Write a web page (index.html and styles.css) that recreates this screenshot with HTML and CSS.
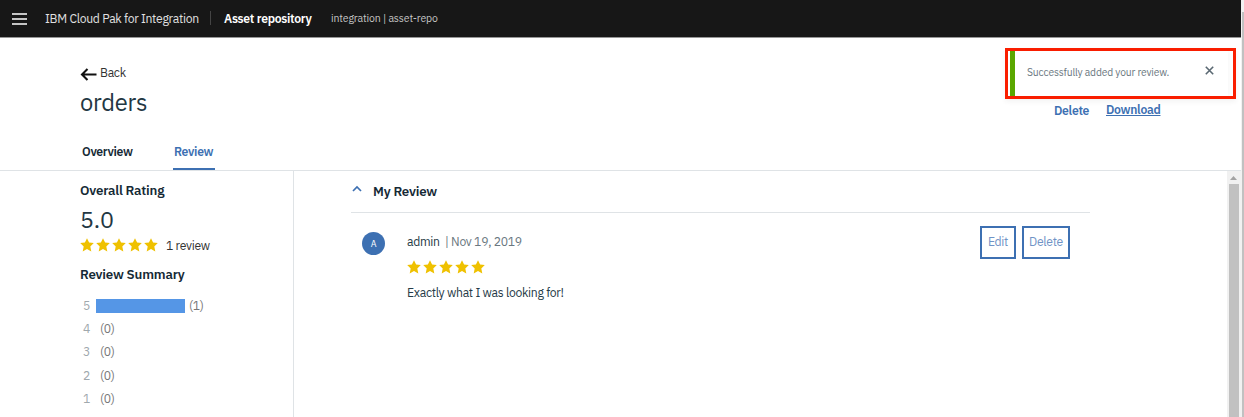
FILE: index.html
```html
<!DOCTYPE html>
<html lang="en">
<head>
<meta charset="utf-8">
<title>Asset repository</title>
<link rel="stylesheet" href="styles.css">
</head>
<body>
<svg class="defs" width="0" height="0"><symbol id="star" viewBox="0 0 14 14"><path d="M7 .2l2.1 4.3 4.7.6-3.5 3.4 1 4.9L7 11l-4.3 2.4 1-4.9L.2 5.1l4.7-.6z"/></symbol></svg>
<div class="screen">
  <div class="app">
    <header class="topbar">
      <svg class="menu" width="15" height="12" viewBox="0 0 15 12"><path d="M0 1h15M0 6h15M0 11h15" stroke="#fff" stroke-width="1.6"/></svg>
      <span class="product">IBM Cloud Pak for Integration</span>
      <span class="rule"></span>
      <span class="service">Asset repository</span>
      <span class="instance">integration | asset-repo</span>
    </header>
    <section class="heading">
      <div class="titles">
        <a class="back"><svg width="17" height="13" viewBox="0 0 17 13"><path d="M16.5 6.5H2M7.5 1L2 6.5 7.5 12" fill="none" stroke="#111" stroke-width="2.1"/></svg><span class="back-label">Back</span></a>
        <h1 class="title">orders</h1>
      </div>
      <div class="actions"><a class="remove">Delete</a><a class="download">Download</a></div>
    </section>
    <nav class="tabs"><a class="tab overview">Overview</a><a class="tab active"><span class="review-label">Review</span></a></nav>
    <div class="content">
      <aside class="ratings">
        <h2 class="h overall">Overall Rating</h2>
        <div class="score">5.0</div>
        <div class="score-row"><span class="stars"><svg><use href="#star"/></svg><svg><use href="#star"/></svg><svg><use href="#star"/></svg><svg><use href="#star"/></svg><svg><use href="#star"/></svg></span><span class="count">1 review</span></div>
        <h2 class="h summary">Review Summary</h2>
        <div class="bars">
          <div class="bar-row"><span class="n">5</span><span class="bar"></span><span class="total">(1)</span></div>
          <div class="bar-row"><span class="n">4</span><span class="total">(0)</span></div>
          <div class="bar-row"><span class="n">3</span><span class="total">(0)</span></div>
          <div class="bar-row"><span class="n">2</span><span class="total">(0)</span></div>
          <div class="bar-row"><span class="n">1</span><span class="total">(0)</span></div>
        </div>
      </aside>
      <main class="reviews">
        <div class="review-head"><svg width="10" height="7" viewBox="0 0 10 7"><path d="M1 6l4-4 4 4" fill="none" stroke="#3d70b2" stroke-width="1.7"/></svg><h2 class="h mine">My Review</h2></div>
        <article class="review">
          <span class="avatar">A</span>
          <div class="body">
            <div class="by"><span class="admin">admin</span><span class="date">| Nov 19, 2019</span></div>
            <span class="stars"><svg><use href="#star"/></svg><svg><use href="#star"/></svg><svg><use href="#star"/></svg><svg><use href="#star"/></svg><svg><use href="#star"/></svg></span>
            <p class="text">Exactly what I was looking for!</p>
          </div>
          <div class="buttons"><button class="btn edit">Edit</button><button class="btn delete">Delete</button></div>
        </article>
      </main>
      <div class="scrollbar"><svg width="13" height="13" viewBox="0 0 13 13"><path d="M3 9h7L6.5 5z" fill="#a3a3a3"/></svg><div class="thumb"></div></div>
    </div>
  </div>
  <div class="window-scroll"><div class="window-thumb"></div></div>
</div>
<div class="highlight"><div class="toast"><span class="message">Successfully added your review.</span><svg width="9" height="9" viewBox="0 0 9 9"><path d="M.8.8l7.4 7.4M8.2.8L.8 8.2" stroke="#5a6872" stroke-width="1.6"/></svg></div></div>
</body>
</html>
```
FILE: styles.css
```css
* { box-sizing: border-box; }
body { margin: 0; background: #fff; color: #152935; font-family: "IBM Plex Sans", Roboto, sans-serif; font-size: 12.2px; letter-spacing: -.3px; line-height: 16px; overflow: hidden; }
h1, h2, p { margin: 0; font-weight: 400; }
span, a { white-space: nowrap; }
svg { display: block; flex: none; }
.defs { position: absolute; }
.screen { display: flex; height: 417px; }
.app { width: 1241px; display: flex; flex-direction: column; }
.topbar { height: 38px; flex: none; display: flex; background: #171717; border-bottom: 1px solid #969696; padding: 10px 0 0 12px; color: #e0e0e0; }
.menu { margin: 3px 18px 0 0; }
.product { width: 165px; }
.rule { width: 1px; height: 14px; margin-top: 1px; background: #444; }
.service { width: 107px; margin-left: 13px; color: #fff; font-weight: 600; }
.instance { font-size: 10.5px; letter-spacing: -.14px; color: #c6c6c6; }
.heading { height: 96px; flex: none; display: flex; padding-left: 80px; }
.titles { width: 974px; }
.back { display: flex; padding-top: 26px; color: #333; }
.back svg { margin: 4px 3px 0 0; }
.title { font-size: 23.7px; letter-spacing: -.24px; line-height: 30px; margin-top: 7px; color: #233743; }
.actions { display: flex; padding-top: 63px; color: #3d70b2; font-weight: 600; }
.remove { width: 52px; padding-top: 1px; }
.download { text-decoration: underline; }
.tabs { height: 37px; flex: none; border-bottom: 1px solid #dfe3e6; padding-left: 82px; display: flex; font-weight: 600; }
.tab { padding-top: 9px; height: 36px; }
.overview { width: 91px; }
.active { width: 42px; padding-left: 1px; color: #3d70b2; border-bottom: 2px solid #3d70b2; }
.content { flex: 1; display: flex; }
.ratings { width: 294px; border-right: 1px solid #dfe3e6; padding: 10px 0 0 80px; }
.h { font-size: 13.3px; letter-spacing: -.19px; font-weight: 600; line-height: 18px; white-space: nowrap; }
.score { font-size: 23.3px; line-height: 30px; margin-top: 5px; letter-spacing: -.2px; color: #233743; }
.score-row { display: flex; height: 15px; margin-top: 4px; color: #333; }
.stars { display: flex; gap: 2px; margin-left: -.5px; }
.score-row .stars svg { margin-top: -.5px; }
.stars svg { width: 14px; height: 14px; fill: #efc100; }
.count { margin: -1px 0 0 8.5px; }
.summary { margin-top: 12px; }
.bars { margin-top: 11px; }
.bar-row { display: flex; align-items: center; height: 23.3px; color: #777; }
.n, .total { padding-bottom: 2px; }
.n { width: 16px; padding-left: 3px; color: #a0a8ad; }
.bar { width: 89px; height: 14px; background: #5596e6; }
.total { margin-left: 4px; }
.reviews { width: 933px; padding-left: 57px; }
.review-head { width: 739px; height: 42px; border-bottom: 1px solid #dfe3e6; display: flex; padding: 11px 0 0 1px; }
.review-head svg { margin: 3px 11px 0 0; }
.review { display: flex; width: 739px; padding: 13px 20px 0 11px; }
.avatar { width: 23px; height: 23px; margin-top: 6px; border-radius: 50%; background: #3d70b2; color: #fff; text-align: center; font-size: 9px; line-height: 23px; }
.body { width: 574px; padding: 7px 0 0 22px; }
.by { display: flex; color: #6a7780; height: 27px; }
.admin { width: 38px; color: #263b47; }
.text { margin-top: 10px; color: #263b47; white-space: nowrap; }
.buttons { display: flex; gap: 6px; margin-left: 21px; }
.btn { height: 33px; padding: 0 0 4px; background: #fff; border: 2px solid #3d70b2; color: #6f93c6; font: inherit; letter-spacing: -.3px; }
.edit { width: 36px; }
.delete { width: 48px; }
.scrollbar { width: 14px; background: #f1f1f1; }
.thumb { width: 10px; height: 234px; margin-left: 2px; background: #c1c1c1; }
.window-scroll { width: 3px; background: #f1f1f1; padding: 12px 0 0 1px; }
.window-thumb { height: 405px; background: #c1c1c1; }
.highlight { position: absolute; left: 1005px; top: 48px; width: 231px; height: 51px; border: 3px solid #fa1e00; background: #fff; padding-left: 2px; box-shadow: 0 3px 5px #0000000c; }
.toast { display: flex; width: 218px; height: 45px; border-left: 5px solid #5aa700; padding: 13px 0 0 12px; color: #6a7780; font-size: 10.3px; letter-spacing: -.16px; box-shadow: 3px 0 4px #00000006; }
.message { width: 178px; }
.toast svg { margin-top: 2px; }
```
